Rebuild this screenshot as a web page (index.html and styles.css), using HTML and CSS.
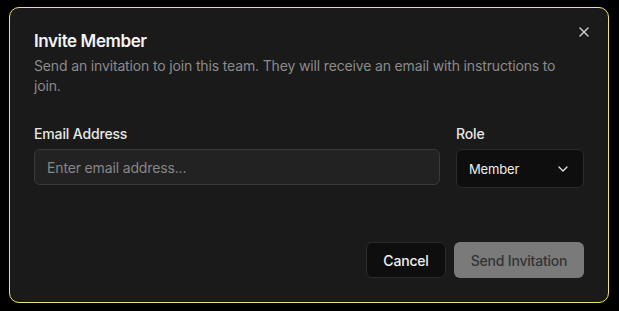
FILE: index.html
```html
<!DOCTYPE html>
<html lang="en">
<head>
<meta charset="utf-8">
<title>Invite Member</title>
<link rel="stylesheet" href="styles.css">
</head>
<body>
<div class="dialog" role="dialog">
  <button class="close" aria-label="Close">
    <svg viewBox="0 0 24 24" width="16" height="16" fill="none" stroke="currentColor" stroke-width="2" stroke-linecap="round" stroke-linejoin="round"><path d="M18 6 6 18"/><path d="m6 6 12 12"/></svg>
  </button>
  <div class="header">
    <h2 class="title">Invite Member</h2>
    <p class="desc">Send an invitation to join this team. They will receive an email with instructions to join.</p>
  </div>
  <div class="fields">
    <div class="field email">
      <label class="label">Email Address</label>
      <div class="input">Enter email address...</div>
    </div>
    <div class="field role">
      <label class="label">Role</label>
      <div class="select">
        <span>Member</span>
        <svg viewBox="0 0 24 24" width="16" height="16" fill="none" stroke="currentColor" stroke-width="2" stroke-linecap="round" stroke-linejoin="round"><path d="m6 9 6 6 6-6"/></svg>
      </div>
    </div>
  </div>
  <div class="footer">
    <button class="btn cancel">Cancel</button>
    <button class="btn send">Send Invitation</button>
  </div>
</div>
</body>
</html>
```
FILE: styles.css
```css
* { box-sizing: border-box; }
html, body { margin: 0; padding: 0; }
body {
  background: #000;
  font-family: Inter, "Noto Sans", sans-serif;
  letter-spacing: -0.15px;
  width: 619px;
  height: 311px;
  overflow: hidden;
  padding: 7px 0 0 9px;
}
.dialog {
  position: relative;
  width: 600px;
  height: 296px;
  background: #1a1a1a;
  border: 1px solid #f3df74;
  border-radius: 10px;
  padding: 24px;
  display: flex;
  flex-direction: column;
}
.close {
  position: absolute;
  right: 16px;
  top: 16px;
  width: 16px;
  height: 16px;
  padding: 0;
  border: 0;
  background: none;
  color: #cfcfcf;
  display: flex;
}
.header { display: flex; flex-direction: column; gap: 6px; }
.title {
  margin: 0;
  font-size: 17px;
  line-height: 18px;
  font-weight: 600;
  color: #f4f4f4;
  letter-spacing: -0.4px;
}
.desc {
  margin: 0;
  max-width: 540px;
  font-size: 14px;
  line-height: 20px;
  color: #8b8b8b;
}
.fields {
  display: flex;
  gap: 16px;
  margin-top: 28px;
  align-items: flex-start;
}
.field { display: flex; flex-direction: column; gap: 5px; }
.email { flex: 1; }
.role { width: 128px; }
.label {
  font-size: 14px;
  line-height: 20px;
  font-weight: 500;
  color: #e8e8e8;
}
.input {
  height: 36px;
  border: 1px solid #3a3a3a;
  background: #222222;
  border-radius: 6px;
  padding: 0 12px;
  display: flex;
  align-items: center;
  font-size: 14px;
  color: #868686;
}
.select {
  height: 39px;
  border: 1px solid #2c2c2c;
  background: #0e0e0e;
  border-radius: 6px;
  padding: 0 12px;
  display: flex;
  align-items: center;
  justify-content: space-between;
  font-size: 13px;
  color: #ececec;
}
.select svg { color: #e0e0e0; }
.footer {
  margin-top: auto;
  display: flex;
  justify-content: flex-end;
  gap: 8px;
}
.btn {
  height: 36px;
  border-radius: 6px;
  font-family: inherit;
  font-size: 14px;
  font-weight: 500;
  letter-spacing: -0.2px;
  padding: 0;
  white-space: nowrap;
  display: flex;
  align-items: center;
  justify-content: center;
}
.cancel {
  width: 80px;
  background: #0e0e0e;
  border: 1px solid #2c2c2c;
  color: #f0f0f0;
}
.send {
  width: 130px;
  background: #7a7a7a;
  border: 0;
  color: #333333;
}
```
